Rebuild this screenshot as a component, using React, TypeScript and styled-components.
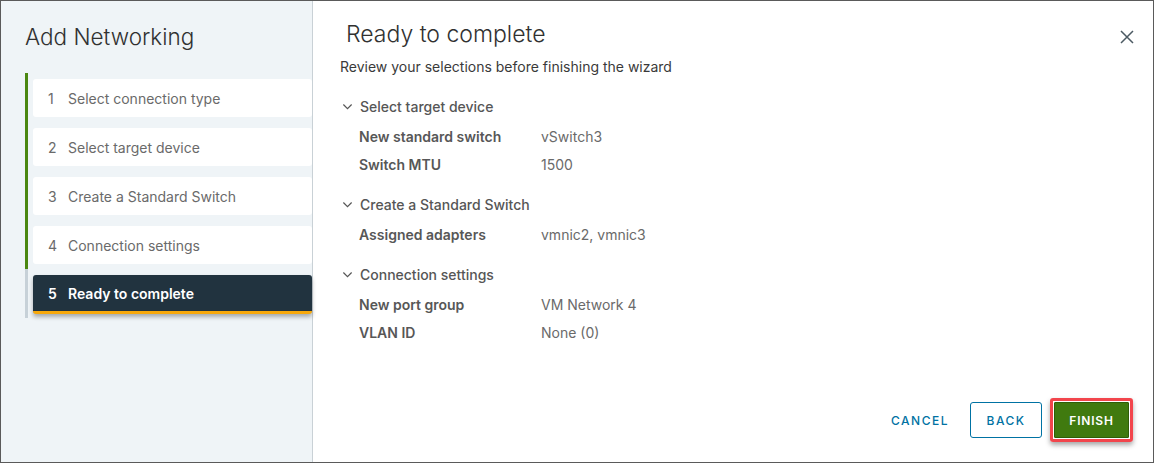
import React from 'react';
import styled, { createGlobalStyle } from 'styled-components';

type Step = { num: number; label: string; done: boolean; active?: boolean };
type Row = { label: string; value: string };
type Section = { title: string; rows: Row[] };

const steps: Step[] = [
  { num: 1, label: 'Select connection type', done: true },
  { num: 2, label: 'Select target device', done: true },
  { num: 3, label: 'Create a Standard Switch', done: true },
  { num: 4, label: 'Connection settings', done: true },
  { num: 5, label: 'Ready to complete', done: false, active: true },
];

const sections: Section[] = [
  {
    title: 'Select target device',
    rows: [
      { label: 'New standard switch', value: 'vSwitch3' },
      { label: 'Switch MTU', value: '1500' },
    ],
  },
  {
    title: 'Create a Standard Switch',
    rows: [{ label: 'Assigned adapters', value: 'vmnic2, vmnic3' }],
  },
  {
    title: 'Connection settings',
    rows: [
      { label: 'New port group', value: 'VM Network 4' },
      { label: 'VLAN ID', value: 'None (0)' },
    ],
  },
];

const Chevron = () => (
  <svg width="11" height="11" viewBox="0 0 12 12" fill="none">
    <path d="M1.5 3.8 6 8.3l4.5-4.5" stroke="#565656" strokeWidth="1.3" />
  </svg>
);

const CloseIcon = () => (
  <svg width="14" height="14" viewBox="0 0 14 14" fill="none">
    <path d="M1 1l12 12M13 1 1 13" stroke="#4c5a63" strokeWidth="1.5" />
  </svg>
);

const App: React.FC = () => {
  return (
    <>
      <GlobalStyle />
      <Dialog>
        <Sidebar>
          <SideTitle>Add Networking</SideTitle>
          <StepList>
            {steps.map((s) => (
              <StepRow key={s.num} $done={s.done}>
                <StepItem $active={!!s.active}>
                  <StepNum>{s.num}</StepNum>
                  {s.label}
                </StepItem>
              </StepRow>
            ))}
          </StepList>
        </Sidebar>

        <Main>
          <Header>
            <MainTitle>Ready to complete</MainTitle>
            <CloseButton aria-label="Close">
              <CloseIcon />
            </CloseButton>
          </Header>
          <Subtitle>Review your selections before finishing the wizard</Subtitle>

          <Summary>
            {sections.map((sec) => (
              <Block key={sec.title}>
                <BlockHead>
                  <Chevron />
                  {sec.title}
                </BlockHead>
                {sec.rows.map((r) => (
                  <DataRow key={r.label}>
                    <DataLabel>{r.label}</DataLabel>
                    <DataValue>{r.value}</DataValue>
                  </DataRow>
                ))}
              </Block>
            ))}
          </Summary>

          <Footer>
            <LinkButton>CANCEL</LinkButton>
            <OutlineButton>BACK</OutlineButton>
            <Highlight>
              <PrimaryButton>FINISH</PrimaryButton>
            </Highlight>
          </Footer>
        </Main>
      </Dialog>
    </>
  );
};

export default App;

const GlobalStyle = createGlobalStyle`
  html, body {
    margin: 0;
    padding: 0;
    background: #fff;
  }
  body {
    font-family: Inter, Lato, sans-serif;
    color: #565656;
  }
`;

const Dialog = styled.div`
  box-sizing: border-box;
  width: 1154px;
  height: 463px;
  border: 1px solid #5a5a5a;
  display: grid;
  grid-template-columns: 312px 1fr;
  background: #fff;
  overflow: hidden;
`;

const Sidebar = styled.aside`
  background: #eff4f7;
  border-right: 1px solid #c9d1d6;
  padding: 22px 0 0 24px;
`;

const SideTitle = styled.h1`
  margin: 0 0 22px 0;
  font-size: 22.5px;
  font-weight: 300;
  color: #313131;
  line-height: 28px;
`;

const StepList = styled.div`
  display: flex;
  flex-direction: column;
`;

const StepRow = styled.div<{ $done: boolean }>`
  border-left: 3px solid ${(p) => (p.$done ? '#4b8711' : '#c7d1d8')};
  padding: 6px 0 5px 5px;
  &:last-child {
    padding-bottom: 4px;
  }
`;

const StepItem = styled.div<{ $active: boolean }>`
  box-sizing: border-box;
  height: ${(p) => (p.$active ? '39px' : '38px')};
  display: flex;
  align-items: center;
  padding-left: 15px;
  border-radius: 3px;
  font-size: 14px;
  background: ${(p) => (p.$active ? '#21333f' : '#fff')};
  color: ${(p) => (p.$active ? '#fff' : '#6a6a6a')};
  font-weight: ${(p) => (p.$active ? 600 : 400)};
  border-bottom: ${(p) => (p.$active ? '3px solid #f8a90c' : 'none')};
  box-shadow: ${(p) => (p.$active ? '0 3px 4px rgba(0,0,0,0.3)' : 'none')};
`;

const StepNum = styled.span`
  width: 20px;
`;

const Main = styled.main`
  display: flex;
  flex-direction: column;
  padding: 20px 20px 20px 27px;
  min-width: 0;
`;

const Header = styled.div`
  display: flex;
  align-items: flex-start;
  justify-content: space-between;
`;

const MainTitle = styled.h2`
  margin: 0 0 0 6px;
  font-size: 23px;
  font-weight: 300;
  color: #313131;
  line-height: 26px;
`;

const CloseButton = styled.button`
  border: none;
  background: none;
  padding: 0;
  margin: 9px -1px 0 0;
  width: 14px;
  height: 14px;
  display: flex;
`;

const Subtitle = styled.p`
  margin: 11px 0 0;
  font-size: 14px;
  color: #3a3a3a;
  line-height: 18px;
`;

const Summary = styled.div`
  display: flex;
  flex-direction: column;
  gap: 17px;
  margin-top: 21px;
`;

const Block = styled.section`
  display: flex;
  flex-direction: column;
`;

const BlockHead = styled.div`
  display: flex;
  align-items: center;
  gap: 7px;
  padding-left: 2px;
  height: 18px;
  margin-bottom: 7px;
  font-size: 14px;
  font-weight: 500;
  color: #565656;
`;

const DataRow = styled.div`
  display: grid;
  grid-template-columns: 182px 1fr;
  padding-left: 19px;
  height: 28px;
  align-items: center;
  font-size: 14px;
`;

const DataLabel = styled.span`
  font-weight: 600;
  color: #575757;
`;

const DataValue = styled.span`
  color: #6a6a6a;
`;

const Footer = styled.div`
  margin-top: auto;
  display: flex;
  justify-content: flex-end;
  align-items: center;
`;

const BaseButton = styled.button`
  box-sizing: border-box;
  height: 36px;
  font-family: inherit;
  font-size: 12px;
  font-weight: 500;
  letter-spacing: 1.5px;
  border-radius: 3px;
  cursor: pointer;
`;

const LinkButton = styled(BaseButton)`
  border: 1px solid transparent;
  background: none;
  color: #0072a3;
  padding: 0 20px;
`;

const OutlineButton = styled(BaseButton)`
  border: 1px solid #0072a3;
  background: #fff;
  color: #0072a3;
  width: 72px;
  padding: 0;
  margin-right: 8px;
`;

const Highlight = styled.div`
  display: flex;
  border: 3px solid #f2454c;
  border-radius: 3px;
  padding: 1px;
  box-shadow: 0 3px 5px rgba(0, 0, 0, 0.35);
`;

const PrimaryButton = styled(BaseButton)`
  border: 1px solid #2f5e08;
  background: #407a0f;
  color: #fff;
  width: 75px;
  padding: 0;
  font-weight: 600;
  letter-spacing: 0.8px;
  border-radius: 1px;
`;
